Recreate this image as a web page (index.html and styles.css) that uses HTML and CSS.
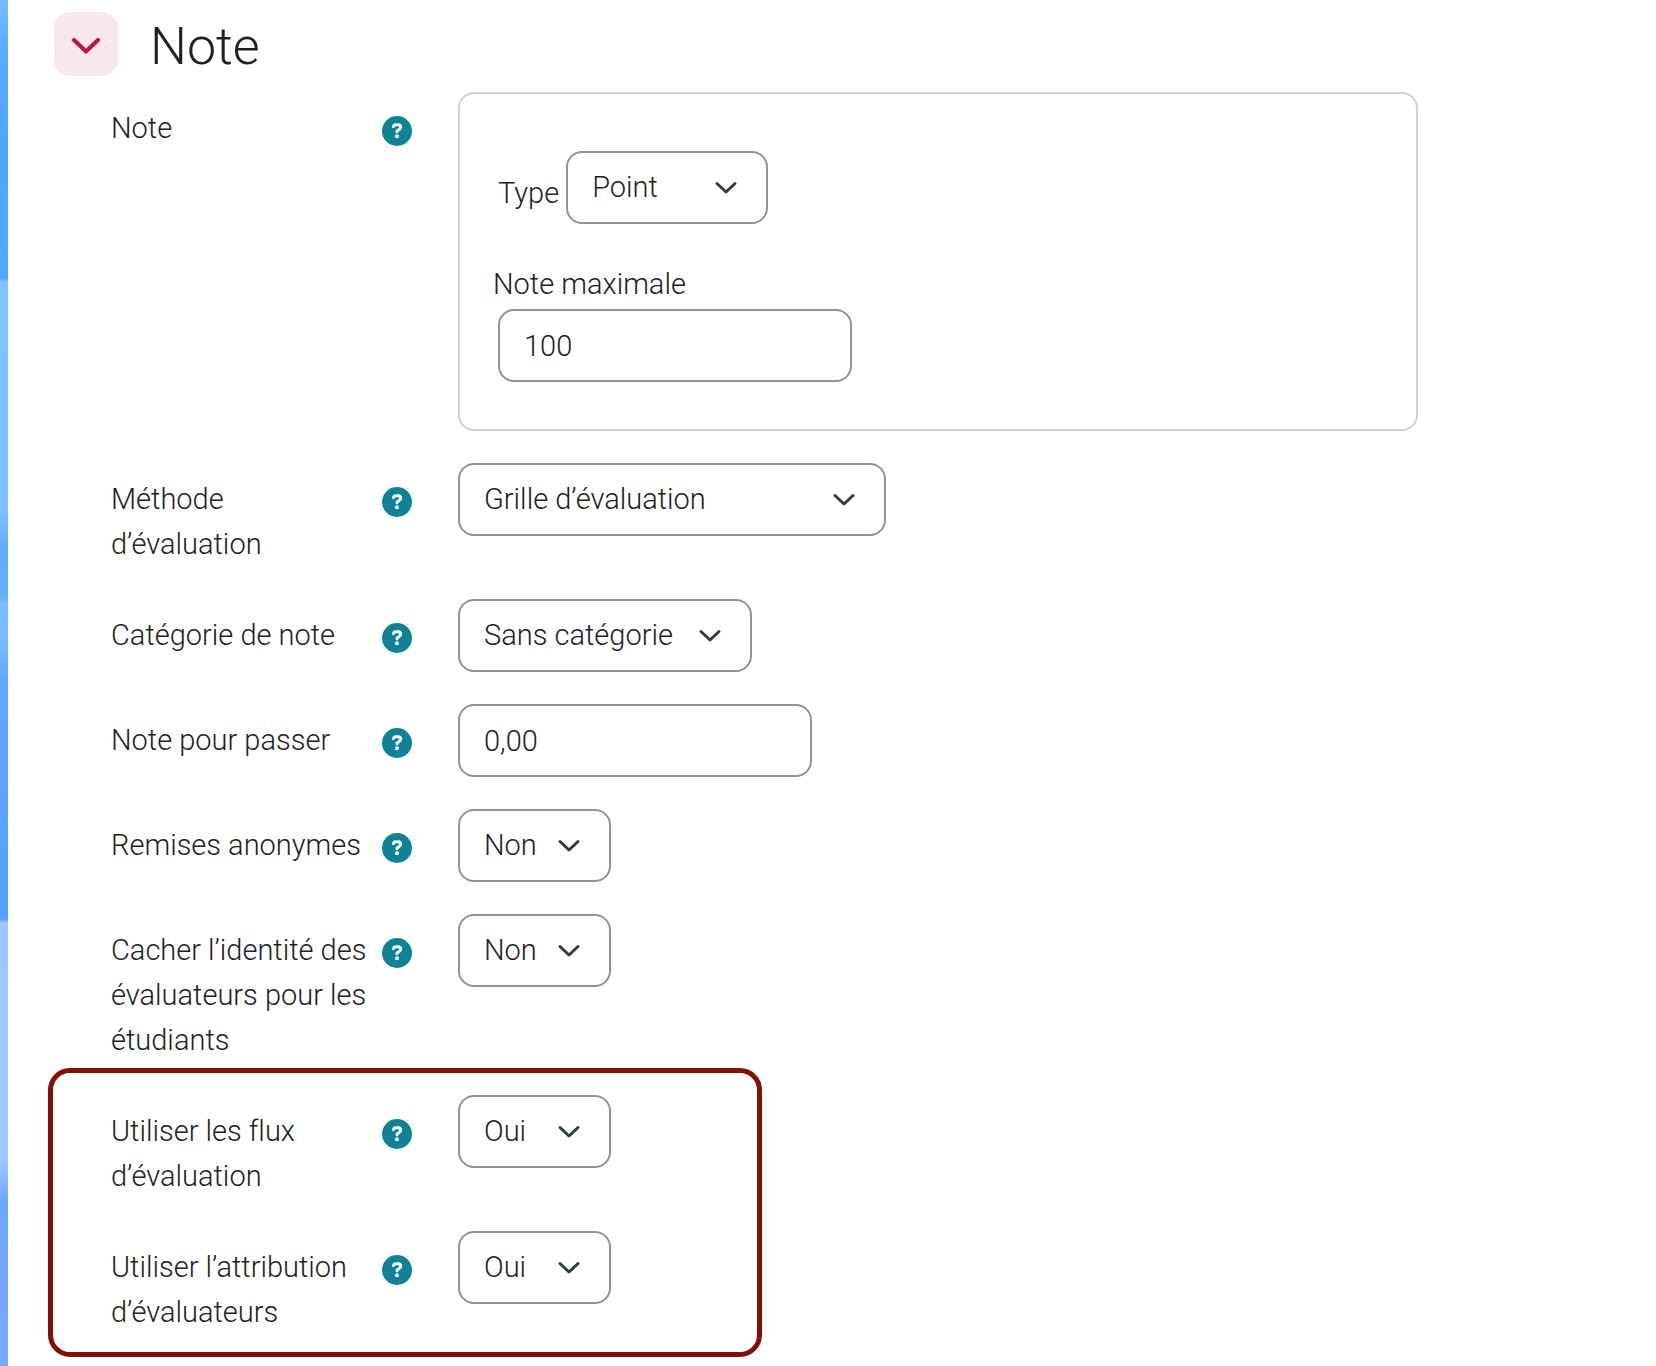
FILE: index.html
```html
<!DOCTYPE html>
<html lang="fr">
<head>
  <meta charset="UTF-8">
  <meta name="viewport" content="width=device-width, initial-scale=1.0">
  <title>Note</title>
  <link rel="stylesheet" href="styles.css">
</head>
<body>
  <svg class="sprite" aria-hidden="true">
    <symbol id="icon-help" viewBox="0 0 30 30">
      <circle cx="15" cy="15" r="15" fill="#0f8296"/>
      <path d="M11.4 10.6Q11.9 8.7 14 8.7H16Q18.7 8.7 18.7 11.1Q18.7 12.7 17.2 13.6L15 14.9V15.9" fill="none" stroke="#fff" stroke-width="2.9" stroke-linecap="round" stroke-linejoin="round"/>
      <circle cx="15" cy="20.2" r="2" fill="#fff"/>
    </symbol>
  </svg>

  <main class="page">
    <div class="section-header">
      <button type="button" class="toggle" id="toggleButton" aria-label="Replier Note" aria-expanded="true">
        <svg width="28" height="16" viewBox="0 0 28 16" fill="none" stroke="#c0143c" stroke-width="4" stroke-linecap="round" stroke-linejoin="round"><path d="M2 2L14 13.500L26 2"/></svg>
      </button>
      <h1>Note</h1>
    </div>

    <form class="grade-form" id="gradeForm">
      <div class="form-row">
        <div class="form-label">
          <span id="noteLabel">Note</span>
          <button type="button" class="help" aria-label="Aide sur Note"><svg><use href="#icon-help"/></svg></button>
        </div>
        <div class="grade-box" role="group" aria-labelledby="noteLabel">
          <div class="type-row">
            <label for="gradeType">Type</label>
            <select id="gradeType" class="select-medium">
              <option>Point</option>
              <option>Barème</option>
              <option>Aucune</option>
            </select>
          </div>
          <label for="gradeMax">Note maximale</label>
          <input type="text" id="gradeMax" value="100">
        </div>
      </div>

      <div class="form-row">
        <div class="form-label">
          <label for="method">Méthode d’évaluation</label>
          <button type="button" class="help" aria-label="Aide sur Méthode d’évaluation"><svg><use href="#icon-help"/></svg></button>
        </div>
        <select id="method" class="select-wide">
          <option>Grille d’évaluation</option>
          <option>Évaluation simple directe</option>
        </select>
      </div>

      <div class="form-row">
        <div class="form-label">
          <label for="category">Catégorie de note</label>
          <button type="button" class="help" aria-label="Aide sur Catégorie de note"><svg><use href="#icon-help"/></svg></button>
        </div>
        <select id="category" class="select-large">
          <option>Sans catégorie</option>
        </select>
      </div>

      <div class="form-row">
        <div class="form-label">
          <label for="gradePass">Note pour passer</label>
          <button type="button" class="help" aria-label="Aide sur Note pour passer"><svg><use href="#icon-help"/></svg></button>
        </div>
        <input type="text" id="gradePass" value="0,00">
      </div>

      <div class="form-row">
        <div class="form-label">
          <label for="blind">Remises anonymes</label>
          <button type="button" class="help" aria-label="Aide sur Remises anonymes"><svg><use href="#icon-help"/></svg></button>
        </div>
        <select id="blind" class="select-small">
          <option>Non</option>
          <option>Oui</option>
        </select>
      </div>

      <div class="form-row">
        <div class="form-label">
          <label for="hideGrader">Cacher l’identité des évaluateurs pour les étudiants</label>
          <button type="button" class="help" aria-label="Aide sur Cacher l’identité"><svg><use href="#icon-help"/></svg></button>
        </div>
        <select id="hideGrader" class="select-small">
          <option>Non</option>
          <option>Oui</option>
        </select>
      </div>

      <div class="highlight">
        <div class="form-row">
          <div class="form-label">
            <label for="workflow">Utiliser les flux d’évaluation</label>
            <button type="button" class="help" aria-label="Aide sur les flux d’évaluation"><svg><use href="#icon-help"/></svg></button>
          </div>
          <select id="workflow" class="select-small">
            <option>Oui</option>
            <option>Non</option>
          </select>
        </div>

        <div class="form-row">
          <div class="form-label">
            <label for="allocation">Utiliser l’attribution d’évaluateurs</label>
            <button type="button" class="help" aria-label="Aide sur l’attribution d’évaluateurs"><svg><use href="#icon-help"/></svg></button>
          </div>
          <select id="allocation" class="select-small">
            <option>Oui</option>
            <option>Non</option>
          </select>
        </div>
      </div>
    </form>
  </main>

  <script>
    const toggleButton = document.getElementById('toggleButton');
    const gradeForm = document.getElementById('gradeForm');

    toggleButton.addEventListener('click', function () {
      gradeForm.hidden = !gradeForm.hidden;
      toggleButton.setAttribute('aria-expanded', String(!gradeForm.hidden));
    });
  </script>
</body>
</html>
```
FILE: styles.css
```css
*, *::after {
  box-sizing: border-box;
}

body {
  margin: 0;
  font-family: Roboto, "Liberation Sans", sans-serif;
  font-size: 29px;
  font-weight: 300;
  font-variant-ligatures: none;
  line-height: 45px;
  color: #1d2125;
  /* blue backdrop that shows left of the page */
  background: linear-gradient(#74bcff 0, #5aabff 50px, #4fa6ff 150px, #4fa8ff 279px, #85c1ff 281px, #80bfff 510px, #62acf8 550px, #68b0fb 598px, #7dbcff 603px, #7bbaff 640px, #5fa9ff 680px, #55a0ff 919px, #9dc7ff 923px, #9fc8ff 1160px, #6ea6ff 1200px, #78a8ff 1366px);
}

.sprite {
  position: absolute;
  width: 0;
  height: 0;
}

.page {
  min-height: 100vh;
  margin-left: 8px;
  padding: 12px 238px 31px 46px;
  background: #fff;
}

.section-header {
  display: flex;
  align-items: center;
  gap: 32px;
  margin-bottom: 16px;
}

.toggle {
  display: flex;
  align-items: center;
  justify-content: center;
  width: 64px;
  height: 64px;
  padding: 4px 0 0;
  border: none;
  border-radius: 16px;
  background: #f9e7eb;
  cursor: pointer;
}

h1 {
  margin: 0;
  padding-top: 6px;
  font-size: 52px;
  font-weight: 300;
  line-height: 58px;
}

.grade-form {
  display: flex;
  flex-direction: column;
  gap: 32px;
  padding-left: 57px;
}

.grade-form[hidden] {
  display: none;
}

.form-row {
  display: flex;
  align-items: flex-start;
  gap: 46px;
}

.form-label {
  display: flex;
  justify-content: space-between;
  align-items: flex-start;
  flex: 0 0 301px;
  padding-top: 14px;
}

.form-label label {
  max-width: 264px;
}

.help {
  flex: none;
  width: 30px;
  height: 30px;
  margin-top: 10px;
  padding: 0;
  border: none;
  background: none;
  cursor: pointer;
}

.help svg {
  display: block;
  width: 30px;
  height: 30px;
}

input, select {
  height: 73px;
  padding: 0 24px;
  border: 2px solid #8f9297;
  border-radius: 16px;
  background-color: #fff;
  color: inherit;
  font: inherit;
}

input {
  width: 354px;
}

select {
  appearance: none;
  padding-right: 50px;
  background-image: url("data:image/svg+xml,%3Csvg xmlns='http://www.w3.org/2000/svg' viewBox='0 0 24 14'%3E%3Cpath d='M3 2.500L12 11L21 2.500' fill='none' stroke='%23343a40' stroke-width='3' stroke-linecap='round' stroke-linejoin='round'/%3E%3C/svg%3E");
  background-repeat: no-repeat;
  background-position: right 28px center;
  background-size: 24px 14px;
}

.select-small {
  width: 153px;
}

.select-medium {
  width: 202px;
}

.select-large {
  width: 294px;
}

.select-wide {
  width: 428px;
}

.grade-box {
  display: flex;
  flex-direction: column;
  align-items: flex-start;
  flex: 1;
  padding: 57px 33px 47px;
  border: 2px solid #d0d0d0;
  border-radius: 16px;
}

.grade-box input {
  margin: 2px 0 0 5px;
}

.type-row {
  display: flex;
  align-items: center;
  gap: 7px;
  margin: 0 0 38px 5px;
}

.type-row label {
  padding-top: 12px;
}

.highlight {
  position: relative;
  display: flex;
  flex-direction: column;
  gap: 32px;
}

/* frame drawn over the rows, clicks go through it */
.highlight::after {
  content: "";
  position: absolute;
  top: -27px;
  bottom: -22px;
  left: -63px;
  width: 714px;
  border: 5px solid #821003;
  border-radius: 22px;
  pointer-events: none;
}
```
